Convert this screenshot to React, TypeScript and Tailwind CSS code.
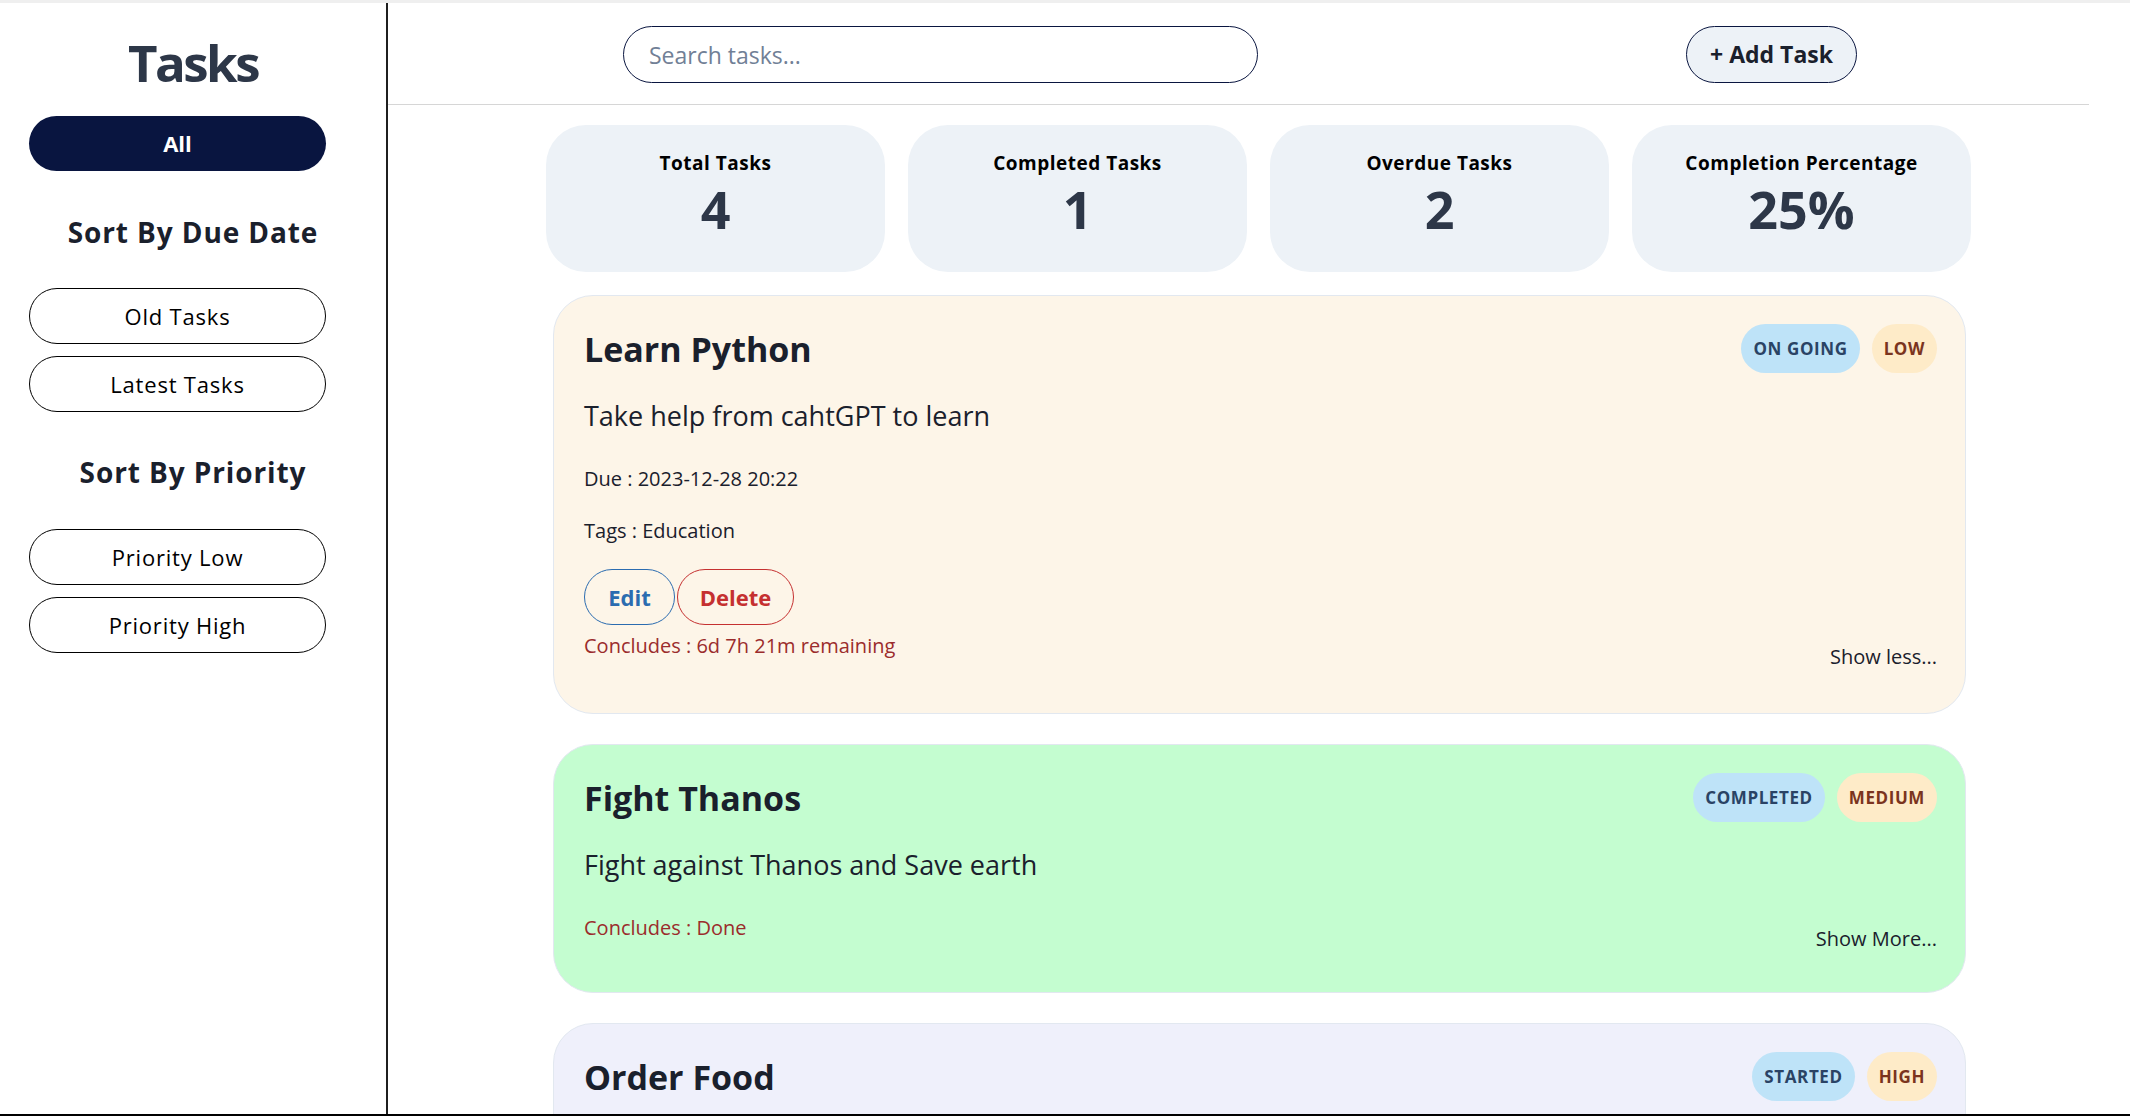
import * as React from "react";

type Task = {
  id: string;
  title: string;
  description: string;
  status: string;
  priority: string;
  bg: string;
  due?: string;
  tags?: string;
  concludes: string;
  expanded: boolean;
};

const TASKS: Task[] = [
  {
    id: "python",
    title: "Learn Python",
    description: "Take help from cahtGPT to learn",
    status: "ON GOING",
    priority: "LOW",
    bg: "bg-[#fdf5e8]",
    due: "2023-12-28 20:22",
    tags: "Education",
    concludes: "6d 7h 21m remaining",
    expanded: true
  },
  {
    id: "thanos",
    title: "Fight Thanos",
    description: "Fight against Thanos and Save earth",
    status: "COMPLETED",
    priority: "MEDIUM",
    bg: "bg-[#c4fdd0]",
    concludes: "Done",
    expanded: false
  },
  {
    id: "food",
    title: "Order Food",
    description: "Order dinner for the team",
    status: "STARTED",
    priority: "HIGH",
    bg: "bg-[#eff0fb]",
    concludes: "2d 1h 4m remaining",
    expanded: false
  }
];

const STATS = [
  { label: "Total Tasks", value: "4" },
  { label: "Completed Tasks", value: "1" },
  { label: "Overdue Tasks", value: "2" },
  { label: "Completion Percentage", value: "25%" }
];

function SideButton({ label }: { label: string }) {
  return (
    <button className="w-[297px] h-[56px] rounded-full border border-black bg-white text-[22px] font-medium tracking-[0.8px] text-black">
      {label}
    </button>
  );
}

function Badge({ text, kind }: { text: string; kind: "status" | "priority" }) {
  return (
    <span
      className={
        kind === "status"
          ? "h-[49px] px-[12px] rounded-full bg-[#bee3f8] text-[#2a4365] flex items-center text-[17px] font-bold tracking-[0.6px]"
          : "h-[49px] px-[12px] rounded-full bg-[#feebc8] text-[#7b341e] flex items-center text-[17px] font-bold tracking-[0.6px]"
      }
    >
      {text}
    </span>
  );
}

function TaskCard({ task }: { task: Task }) {
  return (
    <article
      className={
        task.expanded
          ? `${task.bg} border border-[#e2e8f0] rounded-[40px] pl-[30px] pr-[28px] pt-[28px] pb-[42px]`
          : `${task.bg} border border-[#e2e8f0] rounded-[40px] pl-[30px] pr-[28px] pt-[28px] pb-[39px]`
      }
    >
      <div className="flex items-center justify-between h-[49px]">
        <h2 className="text-[34px] leading-[40px] font-bold text-[#1a202c]">{task.title}</h2>
        <div className="flex gap-[12px]">
          <Badge text={task.status} kind="status" />
          <Badge text={task.priority} kind="priority" />
        </div>
      </div>
      <p className="mt-[25px] text-[27px] leading-[36px] text-[#1a202c]">{task.description}</p>
      {task.expanded ? (
        <>
          <p className="mt-[31px] text-[20px] leading-[28px] text-[#1a202c]">Due : {task.due}</p>
          <p className="mt-[24px] text-[20px] leading-[28px] text-[#1a202c]">Tags : {task.tags}</p>
          <div className="mt-[24px] flex gap-[2px]">
            <button className="h-[56px] w-[91px] rounded-full border border-[#2b6cb0] text-[22px] font-bold text-[#2b6cb0]">
              Edit
            </button>
            <button className="h-[56px] w-[117px] rounded-full border border-[#c53030] text-[22px] font-bold text-[#c53030]">
              Delete
            </button>
          </div>
        </>
      ) : null}
      <div className={task.expanded ? "mt-[7px] flex items-end justify-between" : "mt-[31px] flex items-end justify-between"}>
        <p className="mb-[11px] text-[20px] leading-[28px] text-[#9b2c2c]">Concludes : {task.concludes}</p>
        <span className="text-[20px] leading-[28px] text-[#1a202c]">
          {task.expanded ? "Show less..." : "Show More..."}
        </span>
      </div>
    </article>
  );
}

export default function App() {
  return (
    <div className="flex h-screen w-full overflow-hidden border-t-[3px] border-t-[#efefef] border-b-2 border-b-black bg-white font-['Open_Sans',sans-serif]">
      <aside className="w-[388px] shrink-0 border-r-2 border-r-[#1f1f1f] px-[29px] flex flex-col items-start">
        <h1 className="w-full mt-[33px] text-center text-[51px] leading-[52px] font-bold tracking-[-2.5px] text-[#2d3748]">
          Tasks
        </h1>
        <button className="mt-[28px] w-[297px] h-[55px] rounded-full bg-[#091540] text-[22px] font-bold text-white">
          All
        </button>
        <h3 className="w-full mt-[47px] text-center text-[28px] leading-[28px] font-bold tracking-[0.9px] text-[#1a202c]">
          Sort By Due Date
        </h3>
        <div className="mt-[42px] flex flex-col gap-[12px]">
          <SideButton label="Old Tasks" />
          <SideButton label="Latest Tasks" />
        </div>
        <h3 className="w-full mt-[46px] text-center text-[28px] leading-[28px] font-bold tracking-[0.9px] text-[#1a202c]">
          Sort By Priority
        </h3>
        <div className="mt-[43px] flex flex-col gap-[12px]">
          <SideButton label="Priority Low" />
          <SideButton label="Priority High" />
        </div>
      </aside>

      <main className="flex-1 min-w-0">
        <header className="w-[1701px] h-[102px] border-b border-b-[#d6d6d6] flex items-start pt-[23px] pl-[235px]">
          <input
            placeholder="Search tasks..."
            className="w-[635px] h-[57px] rounded-full border border-[#0a1640] px-[25px] text-[23px] text-[#1a202c] placeholder:text-[#718096] outline-none"
          />
          <button className="ml-[428px] w-[171px] h-[57px] rounded-full border border-[#0a1640] bg-[#edf2f7] text-[23px] font-bold text-[#1a202c]">
            + Add Task
          </button>
        </header>

        <section className="mt-[20px] ml-[158px] w-[1425px] grid grid-cols-4 gap-[23px]">
          {STATS.map((s) => (
            <div key={s.label} className="h-[147px] rounded-[40px] bg-[#edf2f7] flex flex-col items-center pt-[26px]">
              <span className="text-[19px] leading-[24px] font-bold tracking-[0.5px] text-black">{s.label}</span>
              <span className="mt-[6px] text-[52px] leading-[56px] font-bold text-[#2d3748]">{s.value}</span>
            </div>
          ))}
        </section>

        <section className="mt-[23px] ml-[165px] w-[1413px] flex flex-col gap-[30px]">
          {TASKS.map((t) => (
            <TaskCard key={t.id} task={t} />
          ))}
        </section>
      </main>
    </div>
  );
}
